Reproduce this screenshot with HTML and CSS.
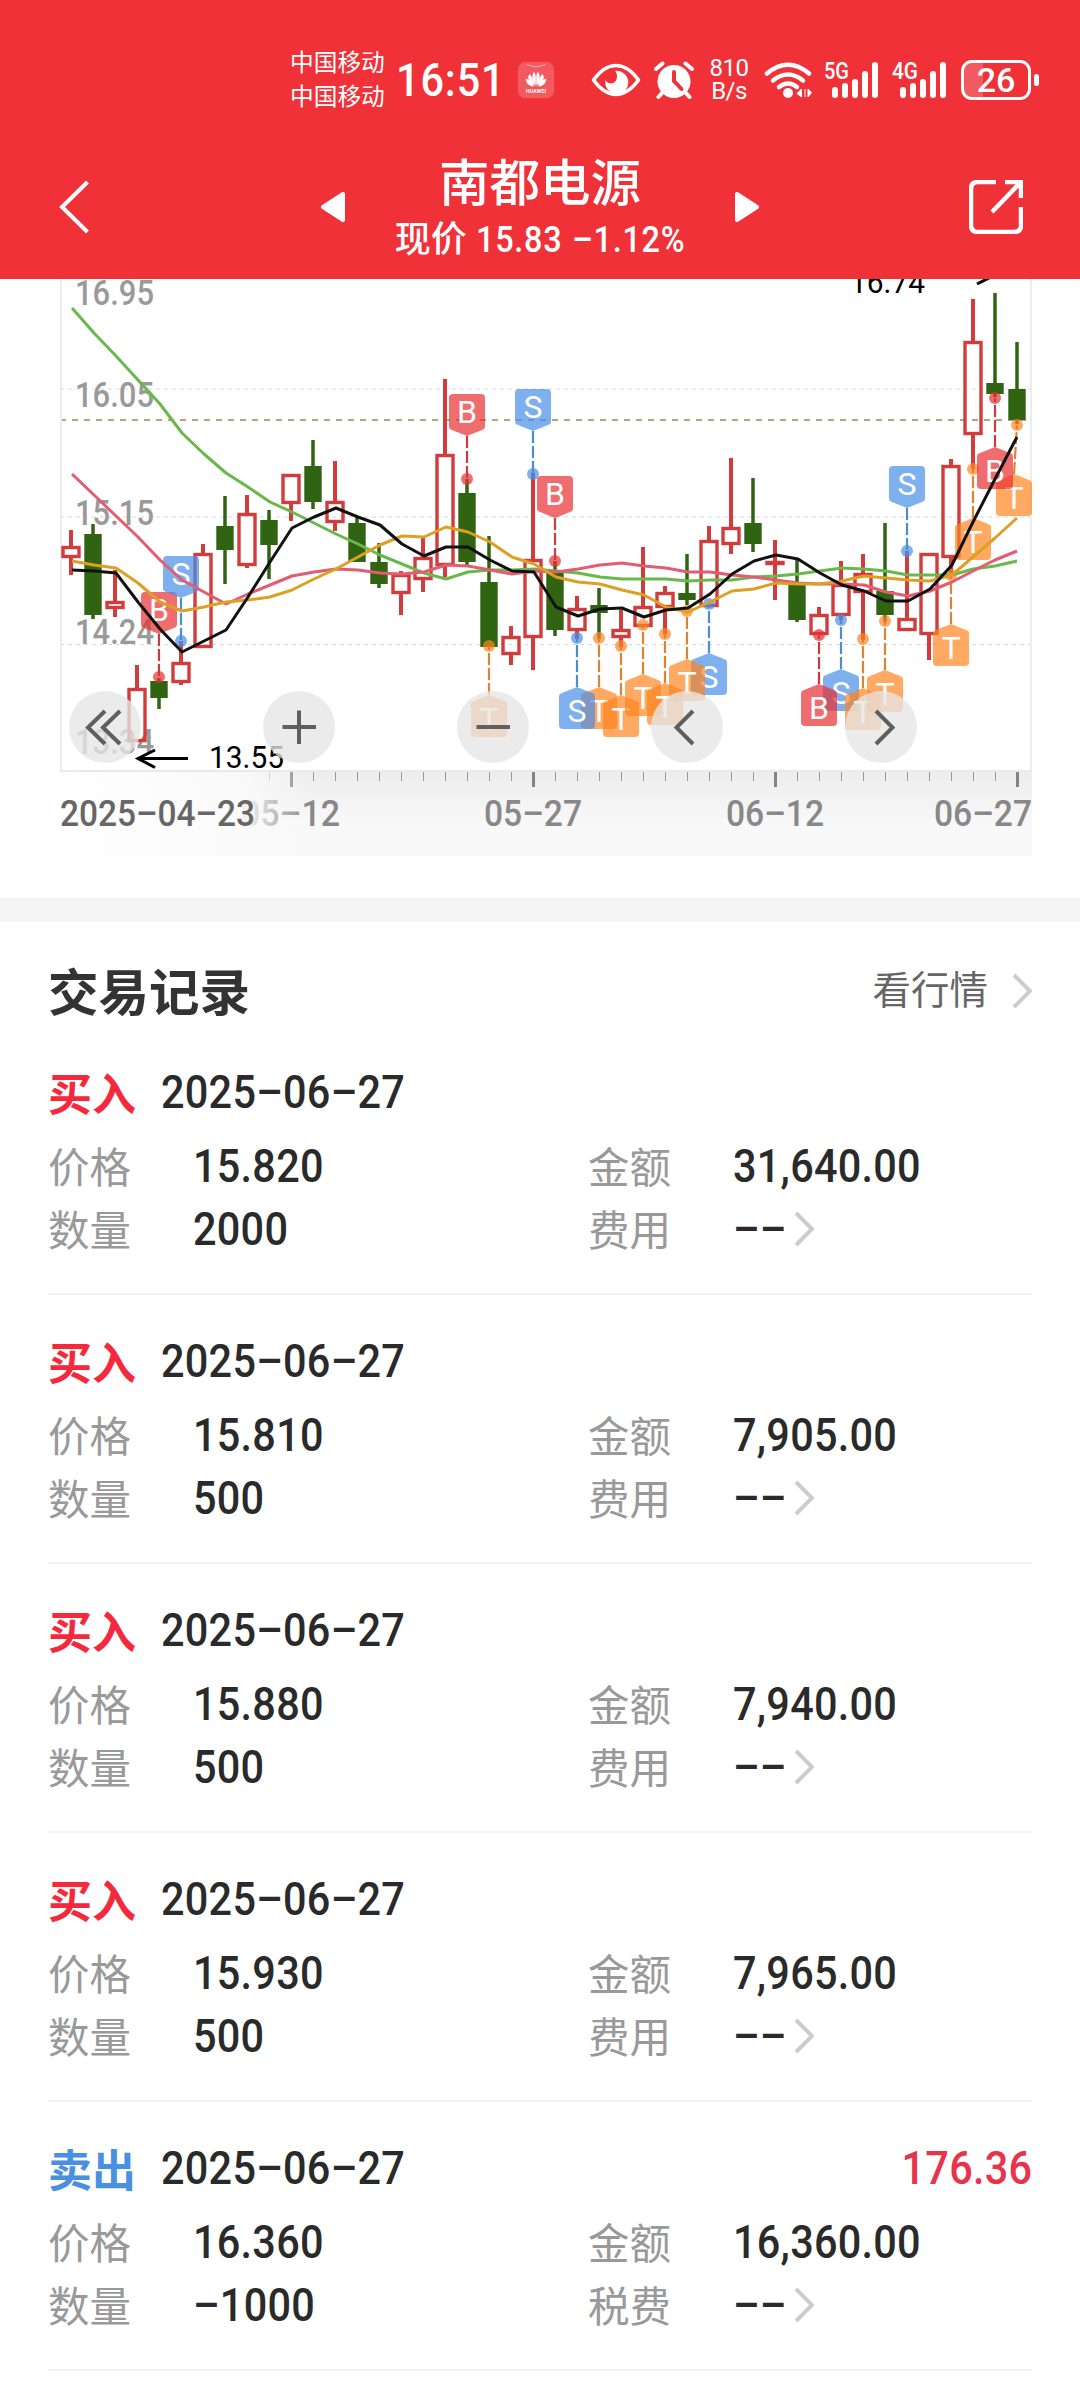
FILE: index.html
```html
<!DOCTYPE html>
<html lang="zh-CN">
<head>
  <meta charset="UTF-8" />
  <meta name="viewport" content="width=device-width, initial-scale=1.0"/>
  <title>南都电源 交易记录</title>
  <link rel="stylesheet" href="styles.css">
</head>
<body>

  <header class="header">
    <div class="status">
      <div class="carrier"><span>中国移动</span><span>中国移动</span></div>
      <div class="time"><span class="num">16:51</span></div>
      <svg class="brand" viewBox="0 0 36 36">
        <rect width="36" height="36" rx="7" fill="#fff" fill-opacity=".2"/>
        <path d="M9 2.5Q18 7 27 2.5" fill="none" stroke="#fff" stroke-opacity=".5"/>
        <g fill="#fff">
          <path d="M17.6 24C14 18 13.500 12 16 10C18 11 18 17 17.600 24Z"/>
          <path d="M18.400 24C22 18 22.500 12 20 10C18 11 18 17 18.400 24Z"/>
          <path d="M16.500 24C10 20 9 15 11.500 12C14 14 16 19 16.500 24Z"/>
          <path d="M19.500 24C26 20 27 15 24.500 12C22 14 20 19 19.500 24Z"/>
          <path d="M15.500 24.500C10 24 7.500 20 8 16.500C11 17.500 14 21 15.500 24.500Z"/>
          <path d="M20.500 24.500C26 24 28.500 20 28 16.500C25 17.500 22 21 20.500 24.500Z"/>
        </g>
        <text x="8" y="31" textLength="20" font-size="5" font-weight="700" fill="#fff">HUAWEI</text>
      </svg>
      <svg class="eye" viewBox="0 0 50 36">
        <path d="M2.500 18Q13 3.500 25 3.500T47.500 18Q37 32.500 25 32.500T2.500 18Z" fill="none" stroke="#fff" stroke-width="3.500" stroke-linejoin="round"/>
        <path d="M24 9A11.500 11.500 0 1 1 14.500 18A6 6 0 0 0 25.500 17.500Q27 12 24 9Z" fill="#fff"/>
      </svg>
      <svg class="alarm" viewBox="0 0 40 40">
        <circle cx="20" cy="21.500" r="16.500" fill="#fff"/>
        <path d="M2 9L8.500 3.500M38 9L31.500 3.500M8 33L4.500 37M32 33L35.500 37" stroke="#fff" stroke-width="4" stroke-linecap="round"/>
        <path d="M20 12V21L27.500 29" fill="none" stroke="#f13138" stroke-width="4" stroke-linecap="round"/>
      </svg>
      <div class="speed"><span>810</span><span>B/s</span></div>
      <svg class="wifi" viewBox="0 0 48 38">
        <g fill="none" stroke="#fff" stroke-width="4.500" stroke-linecap="round">
          <path d="M3 12.500Q24 -5 45 12.500"/>
          <path d="M9 19.500Q24 7.500 39 19.500"/>
          <path d="M15 26Q24 19 33 26"/>
        </g>
        <circle cx="24" cy="32" r="5" fill="#fff"/>
        <path d="M37.500 28V36L33 32.500ZM41 28V36M44 28V36L47.500 31.500Z" fill="#fff" stroke="#fff"/>
      </svg>
      <svg class="signal" viewBox="0 0 56 38">
        <text x="0" y="18" font-size="24" font-weight="500" textLength="25" lengthAdjust="spacingAndGlyphs" fill="#fff">5G</text>
        <path d="M11 29V34M21 25V34M31 21V34M41 13V34M51 4V34" stroke="#fff" stroke-width="6" stroke-linecap="round"/>
      </svg>
      <svg class="signal" viewBox="0 0 56 38">
        <text x="0" y="18" font-size="24" font-weight="500" textLength="26" lengthAdjust="spacingAndGlyphs" fill="#fff">4G</text>
        <path d="M11 29V34M21 25V34M31 21V34M41 13V34M51 4V34" stroke="#fff" stroke-width="6" stroke-linecap="round"/>
      </svg>
      <svg class="battery" viewBox="0 0 79 40">
        <path d="M22 3H11Q3 3 3 11V29Q3 37 11 37H22Z" fill="#fff" fill-opacity=".2"/>
        <rect x="1.500" y="1.500" width="67" height="37" rx="9.500" fill="none" stroke="#fff" stroke-width="3"/>
        <rect x="73" y="14" width="5" height="12" rx="2.500" fill="#fff"/>
        <text x="35" y="32" font-size="34" font-weight="500" text-anchor="middle" fill="#fff">26</text>
      </svg>
    </div>

    <nav class="nav">
      <svg class="back" viewBox="0 0 30 54"><path d="M28.500 2L3 27L28.500 52" fill="none" stroke="#fff" stroke-width="4"/></svg>
      <svg class="arrow" viewBox="0 0 24 30"><path d="M22 2V28L2 15Z" fill="#fff" stroke="#fff" stroke-width="4" stroke-linejoin="round"/></svg>
      <div class="title">
        <h1>南都电源</h1>
        <p>现价 <span class="num">15.83</span> <span class="num">–1.12%</span></p>
      </div>
      <svg class="arrow" viewBox="0 0 24 30"><path d="M2 2V28L22 15Z" fill="#fff" stroke="#fff" stroke-width="4" stroke-linejoin="round"/></svg>
      <svg class="share" viewBox="0 0 54 54">
        <path d="M27 2H9Q2 2 2 9V45Q2 52 9 52H45Q52 52 52 45V27M36 2H52V18M52 2L23 32" fill="none" stroke="#fff" stroke-width="4.500"/>
      </svg>
    </nav>
  </header>

  <section class="chart">
    <svg id="kline" viewBox="0 279 1080 618">
      <defs>
        <linearGradient id="axisDown" x1="0" y1="0" x2="0" y2="1">
          <stop offset="0" stop-color="#ededed"/><stop offset=".65" stop-color="#f9f9f9"/><stop offset="1" stop-color="#f9f9f9"/>
        </linearGradient>
        <linearGradient id="axisFade">
          <stop offset="0" stop-color="#fff"/><stop offset=".75" stop-color="#fafafa" stop-opacity=".9"/><stop offset="1" stop-color="#f9f9f9" stop-opacity="0"/>
        </linearGradient>
      </defs>
    </svg>
    <div class="tools">
      <button><svg viewBox="0 0 72 72"><path d="M36 20L19 36.500L36 53M51 20L34 36.500L51 53"/></svg></button>
      <button><svg viewBox="0 0 72 72"><path d="M36 19.500V53M19.500 36H53"/></svg></button>
      <button><svg viewBox="0 0 72 72"><path d="M19.500 36H53"/></svg></button>
      <button><svg viewBox="0 0 72 72"><path d="M42 20L25.500 36.500L42 53"/></svg></button>
      <button><svg viewBox="0 0 72 72"><path d="M31 20L47.500 36.500L31 53"/></svg></button>
    </div>
  </section>

  <main class="records">
    <div class="heading">
      <h2>交易记录</h2>
      <a class="more">看行情 <svg class="chev" viewBox="0 0 20 36"><path d="M2 2L18 18L2 34"/></svg></a>
    </div>

    <div class="record">
      <div class="top"><b class="buy">买入</b><span class="num">2025–06–27</span></div>
      <div class="row">
        <label>价格</label><div class="val"><span class="num">15.820</span></div>
        <label>金额</label><div class="val"><span class="num">31,640.00</span></div>
      </div>
      <div class="row">
        <label>数量</label><div class="val"><span class="num">2000</span></div>
        <label>费用</label><div class="val fee"><span class="num">––</span><svg class="chev" viewBox="0 0 20 36"><path d="M2 2L18 18L2 34"/></svg></div>
      </div>
    </div>

    <div class="record">
      <div class="top"><b class="buy">买入</b><span class="num">2025–06–27</span></div>
      <div class="row">
        <label>价格</label><div class="val"><span class="num">15.810</span></div>
        <label>金额</label><div class="val"><span class="num">7,905.00</span></div>
      </div>
      <div class="row">
        <label>数量</label><div class="val"><span class="num">500</span></div>
        <label>费用</label><div class="val fee"><span class="num">––</span><svg class="chev" viewBox="0 0 20 36"><path d="M2 2L18 18L2 34"/></svg></div>
      </div>
    </div>

    <div class="record">
      <div class="top"><b class="buy">买入</b><span class="num">2025–06–27</span></div>
      <div class="row">
        <label>价格</label><div class="val"><span class="num">15.880</span></div>
        <label>金额</label><div class="val"><span class="num">7,940.00</span></div>
      </div>
      <div class="row">
        <label>数量</label><div class="val"><span class="num">500</span></div>
        <label>费用</label><div class="val fee"><span class="num">––</span><svg class="chev" viewBox="0 0 20 36"><path d="M2 2L18 18L2 34"/></svg></div>
      </div>
    </div>

    <div class="record">
      <div class="top"><b class="buy">买入</b><span class="num">2025–06–27</span></div>
      <div class="row">
        <label>价格</label><div class="val"><span class="num">15.930</span></div>
        <label>金额</label><div class="val"><span class="num">7,965.00</span></div>
      </div>
      <div class="row">
        <label>数量</label><div class="val"><span class="num">500</span></div>
        <label>费用</label><div class="val fee"><span class="num">––</span><svg class="chev" viewBox="0 0 20 36"><path d="M2 2L18 18L2 34"/></svg></div>
      </div>
    </div>

    <div class="record">
      <div class="top"><b class="sell">卖出</b><span class="num">2025–06–27</span><span class="num profit">176.36</span></div>
      <div class="row">
        <label>价格</label><div class="val"><span class="num">16.360</span></div>
        <label>金额</label><div class="val"><span class="num">16,360.00</span></div>
      </div>
      <div class="row">
        <label>数量</label><div class="val"><span class="num">–1000</span></div>
        <label>税费</label><div class="val fee"><span class="num">––</span><svg class="chev" viewBox="0 0 20 36"><path d="M2 2L18 18L2 34"/></svg></div>
      </div>
    </div>
  </main>

  <script src="chart.js"></script>
</body>
</html>
```
FILE: styles.css
```css
* {
  box-sizing: border-box;
}

body {
  margin: 0;
  background: #fff;
  color: #2a2a2a;
  font-family: Roboto, "Noto Sans CJK SC", sans-serif;
  width: 1080px;
  height: 2400px;
  overflow: hidden;
}

h1, h2, p {
  margin: 0;
}

svg {
  display: block;
  flex: none;
}

.num {
  display: inline-block;
  transform: scaleX(0.9);
  transform-origin: 0 50%;
  font-weight: 500;
  letter-spacing: 0.3px;
}

/* header */
.header {
  height: 279px;
  background: #f13138;
  color: #fff;
}

.status {
  height: 130px;
  padding: 30px 0 0 290px;
  display: flex;
  align-items: center;
}

.carrier {
  width: 96px;
  display: flex;
  flex-direction: column;
  font-size: 23.7px;
  line-height: 34px;
  white-space: nowrap;
}

.time {
  width: 106px;
  margin-left: 10px;
  font-size: 46px;
  white-space: nowrap;
}

.time .num {
  letter-spacing: 1px;
}

.brand {
  width: 36px;
  height: 36px;
  margin-left: 16px;
}

.eye {
  width: 50px;
  height: 36px;
  margin-left: 37px;
}

.alarm {
  width: 40px;
  height: 40px;
  margin-left: 13px;
}

.speed {
  width: 40px;
  margin-left: 15px;
  display: flex;
  flex-direction: column;
  align-items: center;
  font-size: 24px;
  line-height: 23px;
  letter-spacing: -0.5px;
}

.wifi {
  width: 48px;
  height: 38px;
  margin-left: 15px;
}

.signal {
  width: 56px;
  height: 38px;
  margin-left: 12px;
}

.battery {
  width: 79px;
  height: 40px;
  margin-left: 13px;
}

.nav {
  height: 149px;
  padding: 5px 57px 0 59px;
  display: flex;
  align-items: center;
}

.back {
  width: 30px;
  height: 54px;
  margin-right: 232px;
}

.arrow {
  width: 24px;
  height: 30px;
}

.title {
  width: 390px;
  padding-top: 8px;
  text-align: center;
  white-space: nowrap;
}

.title h1 {
  font-size: 50.5px;
  line-height: 58px;
  font-weight: 500;
}

.title p {
  font-size: 36px;
  line-height: 54px;
  font-weight: 500;
  padding-left: 13px;
}

.title .num {
  letter-spacing: 0.8px;
}

.title .num + .num {
  margin-left: -8px;
}

.share {
  width: 54px;
  height: 54px;
  margin-left: auto;
}

/* chart */
.chart {
  position: relative;
  height: 619px;
}

#kline {
  width: 1080px;
  height: 618px;
}

.tools {
  position: absolute;
  left: 69px;
  top: 412px;
  display: flex;
  gap: 122px;
}

.tools button {
  width: 72px;
  height: 72px;
  padding: 0;
  border: none;
  border-radius: 50%;
  background: rgba(230, 230, 230, 0.78);
}

.tools path {
  fill: none;
  stroke: #5f5f5f;
  stroke-width: 4;
}

/* trade records */
.records {
  border-top: 24px solid #f5f5f5;
  padding: 0 48px;
}

.heading {
  height: 104px;
  padding-top: 39px;
  display: flex;
  align-items: center;
  justify-content: space-between;
}

.heading h2 {
  font-size: 50.5px;
  line-height: 60px;
  color: #333;
}

.more {
  display: flex;
  align-items: center;
  font-size: 38.5px;
  line-height: 50px;
  padding-bottom: 6px;
  color: #666;
}

.chev {
  width: 20px;
  height: 36px;
}

.chev path {
  fill: none;
  stroke: #ccc;
  stroke-width: 4;
}

.more .chev {
  margin-left: 24px;
}

.record {
  height: 269px;
  padding-top: 36px;
  border-bottom: 2px solid #f2f2f2;
}

.top {
  height: 60px;
  margin-bottom: 12px;
  display: flex;
  align-items: center;
  font-size: 46px;
}

.top b {
  width: 113px;
  font-size: 44px;
}

.buy {
  color: #f5293b;
}

.sell {
  color: #4a90e2;
}

.profit {
  margin-left: auto;
  color: #e8334a;
  transform-origin: 100% 50%;
}

.row {
  height: 63px;
  display: flex;
  align-items: center;
}

.row label {
  width: 145px;
  padding-bottom: 2px;
  font-size: 41.5px;
  color: #999;
}

.val {
  width: 395px;
  display: flex;
  align-items: center;
  font-size: 46px;
}

.row .val:last-child {
  width: 299px;
}

.fee .chev {
  margin-left: 1px;
}
```
FILE: chart.js
```js
const svg = document.getElementById('kline');
const NS = 'http://www.w3.org/2000/svg';
const X0 = 71;
const STEP = 22;

function add(name, attrs, text) {
  const el = document.createElementNS(NS, name);
  for (const k in attrs) el.setAttribute(k, attrs[k]);
  if (text) el.textContent = text;
  svg.appendChild(el);
}

function line(x1, y1, x2, y2, color, width, dash) {
  add('line', { x1, y1, x2, y2, stroke: color, 'stroke-width': width, 'stroke-dasharray': dash || 'none' });
}

function label(text, x, y, width, color, size, weight) {
  add('text', {
    x, y, fill: color, 'font-size': size, 'font-weight': weight,
    textLength: width, lengthAdjust: 'spacingAndGlyphs'
  }, text);
}

// [up, high, body top, body bottom, low]
const candles = [
  [1, 530, 546, 558, 575], [0, 524, 534, 615, 619], [1, 570, 601, 609, 617], [1, 665, 688, 742, 742],
  [0, 678, 681, 698, 709], [1, 641, 662, 683, 685], [1, 544, 553, 648, 648], [0, 496, 526, 550, 584],
  [1, 495, 513, 566, 568], [0, 510, 520, 545, 579], [1, 474, 474, 504, 521], [0, 440, 466, 502, 509],
  [1, 461, 501, 523, 531], [0, 517, 523, 562, 562], [0, 543, 562, 584, 588], [1, 571, 574, 594, 615],
  [1, 537, 557, 580, 592], [1, 379, 454, 566, 577], [0, 479, 493, 562, 565], [0, 536, 582, 647, 647],
  [1, 626, 636, 655, 665], [1, 473, 559, 638, 670], [0, 561, 573, 630, 636], [1, 596, 608, 631, 639],
  [0, 588, 605, 613, 639], [1, 610, 629, 638, 647], [1, 547, 606, 627, 627], [1, 586, 592, 608, 634],
  [0, 554, 593, 600, 605], [1, 526, 540, 607, 607], [1, 458, 527, 545, 554], [0, 478, 523, 544, 552],
  [1, 540, 561, 565, 600], [0, 558, 585, 620, 622], [1, 607, 614, 635, 635], [1, 561, 584, 616, 620],
  [1, 554, 573, 593, 640], [0, 523, 591, 615, 622], [1, 551, 618, 631, 631], [1, 553, 553, 635, 660],
  [1, 459, 465, 558, 573], [1, 299, 341, 435, 469], [0, 293, 383, 394, 397], [0, 342, 389, 420, 424]
];

// [kind, candle, dot y, box top, box shift]
const marks = [
  ['B', 4, 677, 592], ['S', 5, 641, 556], ['B', 18, 479, 394], ['T', 19, 646, 701],
  ['S', 21, 474, 389], ['B', 22, 561, 476], ['T', 24, 638, 693], ['S', 23, 638, 693],
  ['T', 25, 646, 701], ['T', 26, 625, 680], ['T', 27, 634, 689], ['S', 29, 604, 659],
  ['T', 28, 611, 665], ['S', 35, 620, 675], ['B', 34, 635, 690], ['T', 36, 639, 694],
  ['T', 37, 621, 676], ['S', 38, 551, 466], ['T', 40, 575, 630], ['T', 41, 469, 524],
  ['T', 43, 425, 480, -3], ['B', 42, 398, 453]
];

const averages = {
  '#69b84c': [308, 333, 356, 380, 404, 433, 454, 473, 487, 502, 512, 523, 534, 544, 555, 564, 573, 579, 572, 570, 570,
    569, 571, 573, 577, 579, 579, 579, 581, 580, 580, 577, 576, 574, 571, 568, 569, 571, 575, 575, 575, 569, 566, 561],
  '#e35d70': [474, 495, 516, 537, 560, 580, 592, 604, 594, 585, 576, 572, 569, 570, 573, 574, 572, 565, 566, 570, 574,
    571, 572, 569, 565, 563, 566, 568, 572, 572, 575, 577, 580, 583, 584, 584, 585, 592, 596, 591, 582, 571, 560, 551],
  '#dea023': [561, 565, 568, 583, 602, 611, 607, 602, 600, 597, 590, 579, 569, 557, 545, 536, 537, 527, 532, 542, 557,
    564, 577, 582, 584, 590, 595, 607, 612, 602, 591, 589, 583, 584, 584, 581, 576, 578, 580, 581, 575, 557, 538, 518],
  '#111': [570, 571, 573, 602, 629, 652, 641, 630, 597, 562, 528, 517, 508, 517, 525, 544, 556, 547, 547, 560, 571,
    572, 607, 616, 609, 608, 617, 610, 608, 594, 574, 561, 555, 559, 573, 585, 591, 601, 601, 589, 565, 522, 479, 437]
};

const fills = { B: '#e92f32', S: '#478fe8', T: '#ff8420' };
const strokes = { B: '#c93b3d', S: '#4b8dd2', T: '#dd8434' };

// frame, grid and current price
[[389, '#dcdcdc', 1], [517, '#ebebeb', 2], [644.5, '#d8d8d8', 1]].forEach(g => line(60, g[0], 1032, g[0], g[1], g[2], '4 4'));
line(60, 420, 1032, 420, '#b8a27a', 2, '6 6');
line(61, 279, 61, 771, '#ececec', 2);
line(1031, 279, 1031, 771, '#ececec', 2);

// price scale
label('16.95', 75, 305, 79, '#999', 35, 500);
label('16.05', 75, 406.5, 79, '#999', 35, 500);
label('15.15', 75, 525, 79, '#999', 35, 500);
label('14.24', 75, 643.5, 79, '#999', 35, 500);
label('13.34', 75, 754, 79, '#999', 35, 500);

candles.forEach((c, i) => {
  const [up, high, top, bottom, low] = c;
  const x = X0 + i * STEP;
  const color = up ? '#d23c3c' : '#306413';
  line(x, high, x, top, color, up ? 4 : 3.5);
  line(x, bottom, x, low, color, up ? 4 : 3.5);
  if (up) add('rect', { x: x - 8, y: top + 1.5, width: 16, height: bottom - top - 3, fill: 'none', stroke: color, 'stroke-width': 3.4 });
  else add('rect', { x: x - 8.7, y: top, width: 17.4, height: bottom - top, fill: color });
});

marks.forEach(m => {
  const [kind, i, dot, top, shift] = m;
  const x = X0 + i * STEP;
  const bx = x + (shift || 0);
  const above = top < dot;
  const edge = above ? top + 36 : top;
  const tip = above ? edge + 6 : edge - 6;
  add('circle', { cx: x, cy: dot, r: 6, fill: fills[kind], 'fill-opacity': 0.7 });
  line(bx, tip, x, dot, strokes[kind], 2.2, '12 3');
  add('path', { d: `M${bx - 15} ${edge}L${bx} ${tip}L${bx + 15} ${edge}Z`, fill: fills[kind], 'fill-opacity': 0.7 });
  add('rect', { x: bx - 18, y: top, width: 36, height: 36, rx: 4, fill: fills[kind], 'fill-opacity': 0.7 });
  add('text', { x: bx, y: top + 29, fill: '#fff', 'font-size': 32, 'text-anchor': 'middle' }, kind);
});

for (const color in averages) {
  const points = averages[color].map((y, i) => (X0 + 1 + i * STEP - (i > 40 ? 1 : 0)) + ',' + y).join(' ');
  add('polyline', { points, fill: 'none', stroke: color, 'stroke-width': 3, 'stroke-linejoin': 'round' });
}

// lowest and highest price
label('13.55', 209, 767.5, 75, '#000', 31, 400);
add('path', { d: 'M188 758.5H138M155 750L138 758.5L155 767.5', fill: 'none', stroke: '#000', 'stroke-width': 3 });
label('16.74', 850, 293, 75, '#000', 31, 400);
add('path', { d: 'M977 284L995 275L977 266M995 275H945', fill: 'none', stroke: '#000', 'stroke-width': 3 });

// time axis
add('rect', { x: 60, y: 772, width: 972, height: 84, fill: 'url(#axisDown)' });
line(60, 771, 1032, 771, '#e9e9e9', 2);
for (let i = 9; i < 44; i++) {
  const big = (i - 10) % 11 === 0;
  line(X0 + i * STEP + 0.5, 772, X0 + i * STEP + 0.5, big ? 787 : 781, big ? '#848484' : '#999', big ? 3 : 1);
}
label('05–12', 241, 825.5, 99, '#888', 36, 500);
add('rect', { x: 60, y: 772, width: 250, height: 84, fill: 'url(#axisFade)' });
label('2025–04–23', 60, 825.5, 195, '#666', 36, 500);
label('05–27', 484, 825.5, 98, '#888', 36, 500);
label('06–12', 726, 825.5, 98, '#888', 36, 500);
label('06–27', 934, 825.5, 98, '#888', 36, 500);
```
